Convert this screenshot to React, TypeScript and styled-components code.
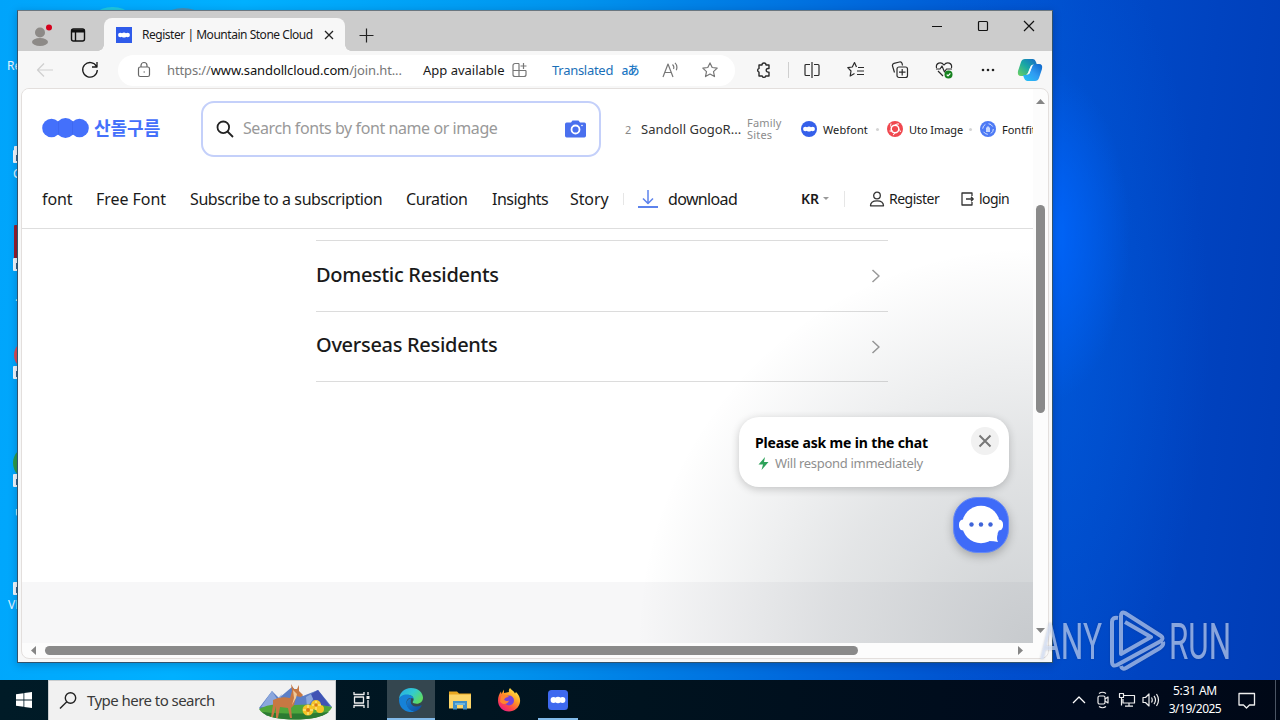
import type { ReactNode } from 'react';
import styled, { createGlobalStyle } from 'styled-components';

const GlobalStyle = createGlobalStyle`
  * { box-sizing: border-box; }
  body {
    margin: 0;
    overflow: hidden;
    font-family: 'Noto Sans', 'Open Sans', 'Noto Sans CJK KR', sans-serif;
  }
  svg { display: block; flex: none; }
`;

const Desktop = styled.div`
  position: relative;
  display: flex;
  flex-direction: column;
  justify-content: flex-end;
  width: 1280px;
  height: 720px;
  overflow: hidden;
  background:
    radial-gradient(ellipse 90px 170px at 1040px 235px, #006cff 0%, rgba(0, 102, 255, 0.7) 30%, rgba(0, 90, 230, 0) 100%),
    radial-gradient(ellipse 170px 420px at 1040px 330px, rgba(0, 95, 225, 0.6), rgba(0, 90, 220, 0) 100%),
    linear-gradient(96deg, #00a4fb 0%, #00b0ff 18%, #0094ee 42%, #0068dc 64%, #004ccb 80%, #0043c0 90%, #003cb6 100%);
`;

const Shortcut = styled.div<{ $y: number; $x?: number; $w?: number; $h?: number; $color?: string; $round?: boolean }>`
  position: absolute;
  left: ${(p) => p.$x ?? 13}px;
  top: ${(p) => p.$y}px;
  width: ${(p) => p.$w ?? 12}px;
  height: ${(p) => p.$h ?? 13}px;
  background: ${(p) => p.$color ?? '#f4f9fd'};
  border-radius: ${(p) => (p.$round ? '50%' : '1px')};
`;

const ArrowMark = styled.div`
  width: 5px;
  height: 6px;
  margin: 5px 0 0 3px;
  border: 2px solid #35618b;
  border-right: 0;
  border-bottom: 0;
`;

const ShortcutLabel = styled.div<{ $y: number; $x: number }>`
  position: absolute;
  left: ${(p) => p.$x}px;
  top: ${(p) => p.$y}px;
  font-size: 12px;
  line-height: 16px;
  color: #e6f5ff;
`;

const Label = styled.span<{ $size: number; $w?: number; $color?: string; $weight?: number; $track?: number }>`
  flex: none;
  width: ${(p) => (p.$w ? `${p.$w}px` : 'auto')};
  font-size: ${(p) => p.$size}px;
  font-weight: ${(p) => p.$weight ?? 400};
  letter-spacing: ${(p) => p.$track ?? 0}px;
  color: ${(p) => p.$color ?? '#1a1a1a'};
  white-space: nowrap;
`;

/* browser window */
const BrowserWindow = styled.div`
  position: absolute;
  left: 17px;
  top: 10px;
  width: 1036px;
  height: 653px;
  display: flex;
  flex-direction: column;
  background: #f7f7f7;
  border: 1px solid #32536c;
  border-top-color: #6b7780;
  box-shadow: 0 2px 8px rgba(0, 20, 60, 0.25);
`;

const TitleBar = styled.div`
  display: flex;
  align-items: flex-end;
  height: 40px;
  flex: none;
  background: #cccccc;
`;

const TitleIcons = styled.div`
  display: flex;
  align-items: center;
  gap: 19px;
  width: 86px;
  height: 33px;
  padding-left: 12px;
`;

const Tab = styled.div`
  position: relative;
  display: flex;
  align-items: center;
  width: 241px;
  height: 33px;
  padding: 0 9px 0 12px;
  background: #f7f7f7;
  border-radius: 8px 8px 0 0;

  &::before,
  &::after {
    content: '';
    position: absolute;
    bottom: 0;
    left: -6px;
    width: 6px;
    height: 6px;
    background: radial-gradient(circle at 0 0, transparent 5.5px, #f7f7f7 6px);
  }
  &::after {
    left: auto;
    right: -6px;
    background: radial-gradient(circle at 100% 0, transparent 5.5px, #f7f7f7 6px);
  }
`;

const TabTitle = styled(Label)`
  margin: 0 8px 0 10px;
`;

const NewTab = styled.div`
  display: flex;
  align-items: center;
  height: 33px;
  padding-left: 13px;
`;

const WindowButtons = styled.div`
  display: flex;
  align-self: flex-start;
  align-items: center;
  height: 29px;
  margin-left: auto;
`;

const Slot = styled.div<{ $w?: number }>`
  display: flex;
  align-items: center;
  justify-content: center;
  flex: none;
  width: ${(p) => p.$w ?? 44}px;
`;

const Toolbar = styled.div`
  display: flex;
  align-items: center;
  height: 37px;
  flex: none;
  padding: 1px 0 0 5px;
`;

const AddressBar = styled.div`
  display: flex;
  align-items: center;
  width: 617px;
  height: 31px;
  margin: 0 4px 0 5px;
  padding-left: 18px;
  border-radius: 16px;
  background: #fff;

  b {
    font-weight: 400;
    color: #111;
  }
`;

const Cluster = styled.div<{ $gap: number; $before: number }>`
  display: flex;
  align-items: center;
  flex: none;
  gap: ${(p) => p.$gap}px;
  margin-left: ${(p) => p.$before}px;
`;

const Rule = styled.div<{ $h: number; $color?: string }>`
  flex: none;
  width: 1px;
  height: ${(p) => p.$h}px;
  background: ${(p) => p.$color ?? '#cfcfcf'};
`;

const Viewport = styled.div`
  display: grid;
  grid-template-columns: 1011px 15px;
  grid-template-rows: 554px 15px;
  width: 1028px;
  height: 571px;
  margin-left: 3px;
  border: 1px solid #e3dfdd;
  border-radius: 8px;
  overflow: hidden;
  background: #fcfcfc;
`;

const Page = styled.div`
  position: relative;
  display: flex;
  flex-direction: column;
  overflow: hidden;
  background: #fff;
`;

const VerticalBar = styled.div`
  display: flex;
  flex-direction: column;
  align-items: center;
  justify-content: space-between;
  padding: 8px 0;
`;

const HorizontalBar = styled.div`
  display: flex;
  align-items: center;
  justify-content: space-between;
  padding: 0 8px;
`;

const Thumb = styled.div<{ $w: number; $h: number }>`
  width: ${(p) => p.$w}px;
  height: ${(p) => p.$h}px;
  border-radius: 5px;
  background: #8a8a8a;
`;

const VerticalThumb = styled(Thumb)`
  margin-bottom: 114px;
`;

const HorizontalThumb = styled(Thumb)`
  margin-right: 152px;
`;

/* page content */
const TopRow = styled.div`
  display: flex;
  align-items: center;
  flex: none;
  height: 80px;
  padding-left: 20px;
`;

const Brand = styled.div`
  display: flex;
  align-items: center;
  flex: none;
  gap: 5px;
  width: 159px;
  margin-bottom: 3px;
`;

const BrandName = styled(Label)`
  font-family: 'Noto Sans CJK KR', sans-serif;
  line-height: 20px;
  padding-bottom: 1px;
`;

const SearchBox = styled.div`
  display: flex;
  align-items: center;
  flex: none;
  width: 400px;
  height: 56px;
  padding: 0 13px 0 13px;
  border: 2px solid #c4d0fa;
  border-radius: 13px;
`;

const Placeholder = styled(Label)`
  flex: 1;
  margin: 0 0 2px 9px;
`;

const FamilyLabel = styled.div`
  flex: none;
  width: 54px;
  font-size: 11px;
  line-height: 12px;
  letter-spacing: 0.2px;
  color: #8c8c8c;
`;

const Site = styled.div<{ $w: number }>`
  display: flex;
  align-items: center;
  flex: none;
  gap: 6px;
  width: ${(p) => p.$w}px;
`;

const Dot = styled.i`
  width: 3px;
  height: 3px;
  border-radius: 50%;
  background: #d4d4d4;
`;

const NavRow = styled.div`
  display: flex;
  align-items: center;
  flex: none;
  height: 60px;
  padding-left: 20px;
  border-bottom: 1px solid #dedede;
`;

const NavLinks = styled.nav`
  display: flex;
  gap: 24px;
`;

const Account = styled.div`
  display: flex;
  align-items: center;
  margin-left: 64px;
`;

const ChoiceList = styled.div`
  flex: none;
  width: 572px;
  margin: 11px 0 0 294px;
  border-top: 1px solid #dcdcdc;
`;

const Choice = styled.div<{ $h: number }>`
  display: flex;
  align-items: center;
  justify-content: space-between;
  height: ${(p) => p.$h}px;
  padding-right: 7px;
  border-bottom: 1px solid #dcdcdc;
`;

const ChoiceTitle = styled(Label)`
  margin-bottom: 4px;
`;

const Footer = styled.div`
  height: 61px;
  margin-top: auto;
  background: #f7f7f8;
`;

const Shade = styled.div`
  position: absolute;
  right: 0;
  bottom: 0;
  width: 400px;
  height: 400px;
  background: radial-gradient(ellipse at right bottom, rgba(29, 43, 54, 0.22) 0%, rgba(29, 43, 54, 0.12) 36%, rgba(29, 39, 46, 0) 70%);
`;

const ChatPopup = styled.div`
  position: absolute;
  left: 717px;
  top: 328px;
  display: flex;
  justify-content: space-between;
  width: 270px;
  height: 70px;
  padding: 10px;
  border-radius: 20px;
  background: #fff;
  box-shadow: 0 2px 8px rgba(0, 0, 0, 0.2);
`;

const ChatText = styled.div`
  display: flex;
  flex-direction: column;
  padding: 5px 0 0 6px;
  line-height: 21px;
`;

const ChatHint = styled.div`
  display: flex;
  align-items: center;
  gap: 5px;
  padding-left: 2px;
`;

const ChatClose = styled.div`
  display: flex;
  align-items: center;
  justify-content: center;
  width: 28px;
  height: 28px;
  border-radius: 50%;
  background: #f1f1f1;
`;

const ChatButton = styled.div`
  position: absolute;
  left: 931px;
  top: 408px;
  width: 56px;
  height: 56px;
  border-radius: 24px;
  background: #3f6bf8;
  border: 1px solid #668af6;
  box-shadow: 0 3px 10px rgba(0, 0, 0, 0.25);
`;

/* taskbar */
const Taskbar = styled.div`
  display: flex;
  height: 40px;
  background: linear-gradient(90deg, #001b27, #00131f 50%, #000a1c 85%, #000817);
`;

const TaskSearch = styled.div`
  display: flex;
  align-items: center;
  width: 288px;
  padding: 0 2px 0 10px;
  border: 1px solid #c9cdcf;
  border-bottom: 0;
  background: #f1f1f1;
`;

const TaskText = styled(Label)`
  flex: 1;
  margin: 0 0 1px 10px;
`;

const TaskItem = styled.div<{ $active?: boolean; $line?: number }>`
  position: relative;
  display: flex;
  align-items: center;
  justify-content: center;
  width: 48px;
  margin-right: 1px;
  background: ${(p) => (p.$active ? '#34464f' : 'transparent')};

  &::after {
    content: '';
    position: absolute;
    bottom: 0;
    width: ${(p) => p.$line ?? 0}px;
    height: 2px;
    background: #82bbea;
  }
`;

const Tray = styled.div`
  display: flex;
  align-items: center;
  margin-left: auto;
`;

const Clock = styled.div`
  display: flex;
  flex-direction: column;
  align-items: center;
  width: 64px;
  line-height: 18px;
`;

const ShowDesktop = styled.div`
  width: 5px;
  height: 40px;
  margin-left: 8px;
  border-left: 1px solid #4b5564;
`;

const Watermark = styled.svg`
  position: absolute;
  left: 1036px;
  top: 606px;
  overflow: visible;
  filter: drop-shadow(0 0 1px rgba(20, 30, 60, 0.35));
`;

const Line = (props: { w?: number; h?: number; stroke?: string; sw?: number; children: ReactNode }) => {
  const { w = 18, h = 18, stroke = '#2b2b2b', sw = 1.2, children } = props;
  return (
    <svg width={w} height={h} viewBox={`0 0 ${w} ${h}`} fill='none' stroke={stroke} strokeWidth={sw} strokeLinejoin='round'>
      {children}
    </svg>
  );
};

const Triangle = ({ d }: { d: string }) => (
  <svg width='9' height='9' viewBox='0 0 9 9' fill='#858585'>
    <path d={d} />
  </svg>
);

const CloudTile = ({ size, radius, fill }: { size: number; radius: number; fill: string }) => (
  <svg width={size} height={size} viewBox='0 0 20 20'>
    <rect width='20' height='20' rx={radius} fill={fill} />
    <g fill='#fff'>
      <circle cx='5.500' cy='10' r='2.900' />
      <circle cx='10' cy='10' r='3.200' />
      <circle cx='14.500' cy='10' r='2.900' />
    </g>
  </svg>
);

const ProfileIcon = () => (
  <svg width='20' height='24' viewBox='0 0 20 24' overflow='visible'>
    <g fill='#8d8a87'>
      <circle cx='10' cy='9.500' r='5' />
      <ellipse cx='10' cy='19' rx='8' ry='4' />
    </g>
    <circle cx='19' cy='4.500' r='3' fill='#d5001c' />
  </svg>
);

const CopilotIcon = () => (
  <svg width='26' height='24' viewBox='0 0 26 24'>
    <defs>
      <linearGradient id='cpA' x1='0' y1='1' x2='1' y2='0'>
        <stop offset='0' stopColor='#6fd35f' />
        <stop offset='.5' stopColor='#19a8a4' />
        <stop offset='1' stopColor='#1667c9' />
      </linearGradient>
      <linearGradient id='cpB' x1='1' y1='0' x2='0' y2='1'>
        <stop offset='0' stopColor='#0c64c8' />
        <stop offset='.5' stopColor='#2f9cf2' />
        <stop offset='1' stopColor='#27c5f5' />
      </linearGradient>
    </defs>
    <path d='M8 1h8q2 0 3 3l1 3h-3q-3 0-4 3l-2 6q-1 2-4 2H4q-4 0-3-5L4 4Q5 1 8 1z' fill='url(#cpA)' />
    <path d='M18 23h-8q-2 0-3-3l-1-3h3q3 0 4-3l2-5q1-3 4-3h3q4 0 3 5l-3 9q-1 3-4 3z' fill='url(#cpB)' />
    <path d='M14 7.500l3-1.500q-2 1-3 5l-1.500 4.500-3.500 1.500q2-1 3-5z' fill='#f5fbff' />
  </svg>
);

const EdgeIcon = () => (
  <svg width='24' height='24' viewBox='0 0 24 24'>
    <defs>
      <linearGradient id='edgeTop' x1='0' y1='0' x2='1' y2='.6'>
        <stop offset='0' stopColor='#26a9e8' />
        <stop offset='.55' stopColor='#32cbd0' />
        <stop offset='1' stopColor='#5edb62' />
      </linearGradient>
      <linearGradient id='edgeLow' x1='0' y1='0' x2='1' y2='1'>
        <stop offset='0' stopColor='#1a80d2' />
        <stop offset='1' stopColor='#0c4a9c' />
      </linearGradient>
    </defs>
    <path d='M0 12C0 5 5 0 12 0c7.500 0 12 5 12 9.800 0 3.700-3 6-6.200 6-2.300 0-4.200-.8-4.200-1.700 0-.6 1-1 1-2.700C14.600 8.500 12 7 9 7 4 7 0 9 0 12z' fill='url(#edgeTop)' />
    <path d='M0 12c0-3.500 4-5.500 8-5.500 3.800 0 6.500 2.200 6.600 4.500C13 9 7.500 9.500 7.500 14.500c0 4.500 4.500 8.500 8.500 9C8 26 0 20.500 0 12z' fill='#1682d8' />
    <path d='M12.500 10c-3 .5-5 2.500-5 5.500 0 5 5 8 8.500 8 3-1 5.500-3.500 6.500-5.500.3-.8-.2-1-.8-.6-4 2.300-10 1-10-4 0-1.300.3-2.500.8-3.400z' fill='url(#edgeLow)' />
  </svg>
);

const FolderIcon = () => (
  <svg width='22' height='20' viewBox='0 0 22 20'>
    <path d='M0 1.500h8l2 2h12V18H0z' fill='#e9a820' />
    <path d='M0 4.500h22V18.500H0z' fill='#fcd568' />
    <path d='M4 11h14v8.500h-4V15H8v4.500H4z' fill='#3f91c9' />
    <path d='M6 13h10v2H6z' fill='#6db6dd' />
  </svg>
);

const FirefoxIcon = () => (
  <svg width='24' height='24' viewBox='0 0 24 24'>
    <defs>
      <linearGradient id='fox' x1='.85' y1='.05' x2='.2' y2='1'>
        <stop offset='0' stopColor='#fff04a' />
        <stop offset='.4' stopColor='#ff9a24' />
        <stop offset='.7' stopColor='#ff4a44' />
        <stop offset='1' stopColor='#e8198b' />
      </linearGradient>
    </defs>
    <path d='M13 0c1 2 4 3 5 5.500l1-1.500c3 3 4.500 6 4 10-.7 5.500-5.500 9.500-11 9.500C6 23.500 1 19 1 12.500 1 9 2 6 4 3.500l.5 2.500 2.500-4.500V5l5-1c-.5-1.500 0-3 1-4z' fill='url(#fox)' />
    <circle cx='12' cy='12.500' r='5' fill='#7543dc' />
    <path d='M4 8c3-1.500 6-1 8 1-3 0-4 1-5 2.500 1 1.500 3 2 5 1-1 4-6 5-9 1z' fill='#ff852e' />
  </svg>
);

const MeadowArt = () => (
  <svg width='75' height='38' viewBox='0 0 75 38'>
    <path d='M1 26L14 9l7 7 13-11 11 9 15-6 14 17-10 9H9z' fill='#5c7fc6' />
    <path d='M3 25L14 9l5 8 5-5-5 14zM48 15l12-7 6 12-10-4-7 9z' fill='#8ba7dd' />
    <path d='M53 12l7-4 12 16H58z' fill='#4053b4' />
    <path d='M1 27c12-6 22-5 35-4 15-1 27-1 38 2-3 8-16 12.500-37 12.500C17 37.500 5 34 1 27z' fill='#4fa63b' />
    <path d='M4 30c18 2 48 2 67 0-6 5-18 7.500-34 7.500S9 35 4 30z' fill='#2c7b32' />
    <path d='M15 18q7-4 17-2l2-7-1-7 3 5h3l2-4v6l4 4-2 2-5-1-2 9-3 3 1 10h-2l-2-10-8-1-2 11h-2V24l-3 11h-2l2-12z' fill='#c77843' />
    <path d='M35 8l1 8-2 7 4-7 1-4z' fill='#f0c89a' />
    <g fill='#f6c426'>
      <circle cx='50' cy='28' r='5.500' />
      <circle cx='58' cy='23' r='5' />
      <circle cx='62' cy='27' r='4' />
    </g>
    <g fill='none' stroke='#fff1a0'>
      <path d='M50 23v10M45 28h10M58 19v9M54 23h9' />
    </g>
    <g fill='#d97a12'>
      <circle cx='50' cy='28' r='2' />
      <circle cx='58' cy='23' r='1.800' />
    </g>
  </svg>
);

const navItems = [
  { text: 'font', w: 30, track: -0.1 },
  { text: 'Free Font', w: 70, track: -0.05 },
  { text: 'Subscribe to a subscription', w: 192, track: -0.4 },
  { text: 'Curation', w: 62, track: -0.4 },
  { text: 'Insights', w: 54, track: -0.5 },
  { text: 'Story', w: 39, track: -0.1 },
];

const choices = [
  { text: 'Domestic Residents', h: 71 },
  { text: 'Overseas Residents', h: 70 },
];

const App = () => {
  return (
    <>
      <GlobalStyle />
      <Desktop>
        <Shortcut $x={98} $y={7} $w={29} $h={12} $color='#1fc9df' $round />
        <Shortcut $x={168} $y={8} $w={30} $h={12} $color='#4a8fb3' $round />
        <ShortcutLabel $x={7} $y={58}>Re</ShortcutLabel>
        <Shortcut $x={14} $y={146} $h={8} />
        <Shortcut $y={150}><ArrowMark /></Shortcut>
        <ShortcutLabel $x={13} $y={166}>C</ShortcutLabel>
        <Shortcut $x={14} $y={225} $h={38} $color='#981e2c' />
        <Shortcut $y={258}><ArrowMark /></Shortcut>
        <ShortcutLabel $x={15} $y={289}>.</ShortcutLabel>
        <Shortcut $x={14} $y={340} $w={30} $h={30} $color='#dc4a52' $round />
        <Shortcut $y={366}><ArrowMark /></Shortcut>
        <Shortcut $y={446} $w={34} $h={34} $color='#2d9c48' $round />
        <Shortcut $y={474}><ArrowMark /></Shortcut>
        <ShortcutLabel $x={15} $y={504}>u</ShortcutLabel>
        <Shortcut $y={582}><ArrowMark /></Shortcut>
        <ShortcutLabel $x={8} $y={597}>VL</ShortcutLabel>

        <BrowserWindow>
          <TitleBar>
            <TitleIcons>
              <ProfileIcon />
              <Line stroke='#111' sw={1.400}>
                <rect x='2.500' y='3' width='13' height='12' rx='2' />
                <path d='M2.500 5h13' strokeWidth='3' />
                <path d='M6.500 5v10' />
              </Line>
            </TitleIcons>
            <Tab>
              <CloudTile size={16} radius={0} fill='#2f5bea' />
              <TabTitle $size={12} $w={171} $track={-0.47}>Register | Mountain Stone Cloud</TabTitle>
              <Line w={16} h={16} stroke='#222' sw={1.300}><path d='M4 4l8 8M12 4l-8 8' /></Line>
            </Tab>
            <NewTab>
              <Line w={16} h={16} stroke='#222'><path d='M8.500 1.500v14M1.500 8.500h14' /></Line>
            </NewTab>
            <WindowButtons>
              <Slot $w={46}><Line w={12} h={12} stroke='#111' sw={1}><path d='M1 6.500h10' /></Line></Slot>
              <Slot $w={46}><Line w={12} h={12} stroke='#111'><rect x='1.500' y='1.500' width='9' height='9' rx='1' /></Line></Slot>
              <Slot $w={46}><Line w={12} h={12} stroke='#111'><path d='M1 1l10 10M11 1L1 11' /></Line></Slot>
            </WindowButtons>
          </TitleBar>

          <Toolbar>
            <Slot><Line stroke='#cfcfcf'><path d='M17 9H1.500M8 2.500L1.500 9 8 15.500' /></Line></Slot>
            <Slot $w={46}>
              <Line stroke='#1b1b1b' sw={1.300}><path d='M15.500 5.500A7.300 7.300 0 1 0 16.300 9M16 1v5h-5' /></Line>
            </Slot>
            <AddressBar>
              <Line w={16} stroke='#666'>
                <rect x='2.500' y='6' width='11' height='9.500' rx='1.800' />
                <path d='M5 6V4.500a3 3 0 0 1 6 0V6M7.500 11h1.500' />
              </Line>
              <Cluster $gap={0} $before={15}>
                <Label $size={13} $w={235} $color='#767676' $track={-0.13}>
                  https://<b>www.sandollcloud.com</b>/join.ht...
                </Label>
              </Cluster>
              <Cluster $gap={8} $before={21}>
                <Label $size={13} $w={81}>App available</Label>
                <Line w={16} h={16} stroke='#777'>
                  <path d='M7 1.500H3a2 2 0 0 0-2 2v9a2 2 0 0 0 2 2h9a2 2 0 0 0 2-2V8.500M7 1.500v13M1 8.500h13M11.500 1v6M8.500 4h6' />
                </Line>
              </Cluster>
              <Cluster $gap={8} $before={24}>
                <Label $size={13} $w={62} $color='#1a6fb8' $track={-0.28}>Translated</Label>
                <Slot $w={16}><Label $size={12} $color='#1a76c4' $weight={500} $track={-1}>aあ</Label></Slot>
              </Cluster>
              <Cluster $gap={24} $before={24}>
                <Line w={16} h={16} stroke='#777'>
                  <path d='M1 15L6 2l5 13M2.700 10.500h6.600M10.500 2.500q2 2 1 4.500M13 .8q3 3 1.300 7.400' />
                </Line>
                <Line w={16} h={16} stroke='#777'>
                  <path d='M8 .9l2.200 4.600 5 .6-3.700 3.500 1 5L8 12.100l-4.500 2.500 1-5L.8 6.100l5-.6z' />
                </Line>
              </Cluster>
            </AddressBar>
            <Slot $w={48}>
              <Line sw={1.400}>
                <path d='M5 4h3a2 2 0 0 1 4 0h3v3.500h-1a1.800 1.800 0 0 0 0 3.600h1V15h-3.300a1.800 1.800 0 0 1-3.500 0H5v-3.800a2 2 0 0 1 0-3.800z' />
              </Line>
            </Slot>
            <Slot $w={3}><Rule $h={16} /></Slot>
            <Slot>
              <Line>
                <path d='M7 3.500H3a1 1 0 0 0-1 1v9a1 1 0 0 0 1 1h4M11 3.500h4a1 1 0 0 1 1 1v9a1 1 0 0 1-1 1h-4M9 1v16' />
              </Line>
            </Slot>
            <Slot>
              <Line>
                <path d='M9.500 6L7.500 1.500 5.300 6l-4.500.7L4 10l-.8 5L7.500 12.500M11 6.500h6M10 10h7M10 13.500h7' />
              </Line>
            </Slot>
            <Slot>
              <Line>
                <path d='M3.500 11.500L1.500 5q-.4-2 1.500-2.600L8.500 1q2-.4 2.600 1.500l.4 2' />
                <rect x='6' y='6' width='10.500' height='10.500' rx='2' />
                <path d='M11.200 8v6.500M8 11.200h6.500' />
              </Line>
            </Slot>
            <Slot>
              <Line>
                <path d='M1.500 7C.5 2 6 0 9 4c3-4 8.500-2 7.500 3M3 10l5 5M1 8h4l2-3 2.500 6L11.500 8H17' />
                <circle cx='13.500' cy='13.500' r='4' fill='#16821f' stroke='none' />
                <path d='M11.700 13.600l1.300 1.200 2.400-2.500' stroke='#fff' />
              </Line>
            </Slot>
            <Slot>
              <svg width='16' height='4' fill='#222'>
                <circle cx='3' cy='2' r='1.300' />
                <circle cx='8' cy='2' r='1.300' />
                <circle cx='13' cy='2' r='1.300' />
              </svg>
            </Slot>
            <Slot $w={40}><CopilotIcon /></Slot>
          </Toolbar>

          <Viewport>
            <Page>
              <TopRow>
                <Brand>
                  <svg width='47' height='20' viewBox='0 0 47 20' fill='#4470fb'>
                    <circle cx='9.500' cy='10' r='9.300' />
                    <circle cx='23.500' cy='10' r='9.900' />
                    <circle cx='37.500' cy='10' r='9.300' />
                    <path d='M16.500 3v14M30.500 3v14' stroke='#3a62e8' strokeWidth='1' opacity='.5' />
                  </svg>
                  <BrandName $size={18} $weight={700} $color='#4470fb'>산돌구름</BrandName>
                </Brand>
                <SearchBox>
                  <Line stroke='#222' sw={1.800}><circle cx='7.300' cy='7.300' r='5.800' /><path d='M11.500 11.500L17 17' /></Line>
                  <Placeholder $size={16} $color='#999' $track={-0.42}>Search fonts by font name or image</Placeholder>
                  <svg width='21' height='18' viewBox='0 0 21 18'>
                    <path d='M2 2.500h4L7.500 .5h6L15 2.500h4a1.800 1.800 0 0 1 2 1.800v11.400a1.800 1.800 0 0 1-2 1.800H2a1.800 1.800 0 0 1-2-1.800V4.300A1.800 1.800 0 0 1 2 2.500z' fill='#4a70ee' />
                    <circle cx='10.500' cy='9.500' r='4' fill='none' stroke='#fff' strokeWidth='1.800' />
                    <circle cx='17' cy='5.500' r='.8' fill='#fff' />
                  </svg>
                </SearchBox>
                <Cluster $gap={9} $before={24}>
                  <Label $size={11} $w={7} $color='#888'>2</Label>
                  <Label $size={13} $w={106} $color='#333'>Sandoll GogoR...</Label>
                </Cluster>
                <FamilyLabel>Family Sites</FamilyLabel>
                <Site $w={86}>
                  <CloudTile size={16} radius={10} fill='#3560ea' />
                  <Label $size={11} $w={47} $track={0.1}>Webfont</Label>
                  <Dot />
                </Site>
                <Site $w={93}>
                  <svg width='16' height='16' viewBox='0 0 16 16'>
                    <circle cx='8' cy='8' r='8' fill='#f0484f' />
                    <circle cx='8' cy='8' r='3.800' fill='none' stroke='#fff' strokeWidth='1.500' />
                    <path d='M4 2.500q-1 2 .5 4M12 3q-2-.5-4 1M13.500 11q-.5-2-2-3M6 14q2-1 2-2.500M2.500 10q1.500.500 3-.500' stroke='#fff' fill='none' />
                  </svg>
                  <Label $size={11} $w={54} $track={-0.05}>Uto Image</Label>
                  <Dot />
                </Site>
                <Site $w={60}>
                  <svg width='16' height='16' viewBox='0 0 16 16'>
                    <circle cx='8' cy='8' r='8' fill='#4d7af5' />
                    <circle cx='8' cy='8' r='5.300' fill='none' stroke='#d5e1ff' strokeDasharray='5 3.300' />
                    <path d='M6 11V7l2-2 2 2v4z' fill='#c8d8ff' />
                  </svg>
                  <Label $size={11}>Fontfit</Label>
                </Site>
              </TopRow>

              <NavRow>
                <NavLinks>
                  {navItems.map((item) => (
                    <Label key={item.text} $size={16} $w={item.w} $track={item.track}>{item.text}</Label>
                  ))}
                </NavLinks>
                <Cluster $gap={14} $before={14}>
                  <Rule $h={12} $color='#e6e6e6' />
                  <Line w={20} h={20} stroke='#5d83ec' sw={1.500}>
                    <path d='M10 1v13M5 9.500l5 5 5-5' />
                    <path d='M0 18h20' strokeWidth='2' />
                  </Line>
                </Cluster>
                <Cluster $gap={0} $before={10}>
                  <Label $size={16} $w={69} $track={-0.65}>download</Label>
                </Cluster>
                <Account>
                  <Label $size={14} $w={22} $weight={600}>KR</Label>
                  <svg width='6' height='4'><path d='M0 0h6L3 3z' fill='#999' /></svg>
                  <Cluster $gap={24} $before={15}>
                    <Rule $h={16} $color='#e6e6e6' />
                    <Cluster $gap={4} $before={0}>
                      <Line w={16} h={16} stroke='#333' sw={1.300}>
                        <circle cx='8' cy='4.500' r='3.300' />
                        <path d='M1.500 14.800q0-5 6.500-5t6.500 5z' />
                      </Line>
                      <Label $size={14} $w={52} $track={-0.5}>Register</Label>
                    </Cluster>
                  </Cluster>
                  <Cluster $gap={3} $before={19}>
                    <Line w={16} h={16} stroke='#333' sw={1.300}>
                      <path d='M12 5V2H2v12h10v-3M6 8h7M11 5.800L13.200 8 11 10.200' />
                    </Line>
                    <Label $size={14} $w={30} $track={-0.6}>login</Label>
                  </Cluster>
                </Account>
              </NavRow>

              <ChoiceList>
                {choices.map((choice) => (
                  <Choice key={choice.text} $h={choice.h}>
                    <ChoiceTitle $size={20} $weight={500} $track={-0.3}>{choice.text}</ChoiceTitle>
                    <Line w={10} h={14} stroke='#999' sw={1.500}><path d='M1.500 1l6.500 6-6.500 6' /></Line>
                  </Choice>
                ))}
              </ChoiceList>
              <Footer />
              <Shade />
              <ChatPopup>
                <ChatText>
                  <Label $size={14} $weight={700} $color='#000' $track={-0.16}>Please ask me in the chat</Label>
                  <ChatHint>
                    <svg width='13' height='13' viewBox='0 0 13 13'><path d='M8 0L1.500 7.500H6L4.500 13 11.500 5H7z' fill='#2ea25a' /></svg>
                    <Label $size={13} $color='#8f8f8f' $track={-0.3}>Will respond immediately</Label>
                  </ChatHint>
                </ChatText>
                <ChatClose>
                  <Line w={14} h={14} stroke='#777' sw={2}><path d='M1.500 1.500l11 11M12.500 1.500l-11 11' /></Line>
                </ChatClose>
              </ChatPopup>
              <ChatButton>
                <svg width='54' height='54' viewBox='0 0 54 54'>
                  <circle cx='27' cy='26.500' r='18.800' fill='#fff' />
                  <rect x='5' y='21.500' width='44' height='11' rx='4.500' fill='#fff' />
                  <path d='M35 43q5 0 9 1-2-3 0-9z' fill='#fff' />
                  <g fill='#3f64d8'>
                    <circle cx='17.500' cy='26.500' r='2.200' />
                    <circle cx='27' cy='26.500' r='2.200' />
                    <circle cx='36.500' cy='26.500' r='2.200' />
                  </g>
                </svg>
              </ChatButton>
            </Page>
            <VerticalBar>
              <Triangle d='M4.500 2L9 7H0z' />
              <VerticalThumb $w={9} $h={208} />
              <Triangle d='M4.500 7L9 2H0z' />
            </VerticalBar>
            <HorizontalBar>
              <Triangle d='M1 4.500L6 0v9z' />
              <HorizontalThumb $w={813} $h={9} />
              <Triangle d='M7 4.500L2 0v9z' />
            </HorizontalBar>
          </Viewport>
        </BrowserWindow>

        <Watermark width='200' height='70' viewBox='0 0 200 70'>
          <g fill='#dce8ff' fillOpacity='.62' fontFamily='Roboto, sans-serif' fontSize='50'>
            <text x='4' y='53' textLength='62' lengthAdjust='spacingAndGlyphs'>ANY</text>
            <text x='133' y='53' textLength='62' lengthAdjust='spacingAndGlyphs'>RUN</text>
          </g>
          <g fill='none' stroke='#dce8ff' strokeOpacity='.6' strokeWidth='4' strokeLinejoin='round'>
            <path d='M82 12q-6-1-6 4v40q0 5 5 3l44-24q3-3 0-5L89 7q-4-2-4 3v38l30-17-26-15' />
            <path d='M85 60q1 4 5 2l34-20q4-3 3-6' />
          </g>
        </Watermark>

        <Taskbar>
          <Slot $w={48}>
            <svg width='16' height='16' viewBox='0 0 16 16' fill='#fff'>
              <path d='M0 2.200L7.500 1.200V7.600H0zM8.300 1.100L16 0v7.600H8.300zM0 8.400h7.500v6.400L0 13.800zM8.300 8.400H16V16l-7.700-1.100z' />
            </svg>
          </Slot>
          <TaskSearch>
            <Line stroke='#222' sw={1.400}><circle cx='11.500' cy='6' r='5.200' /><path d='M7.800 9.800L1 16.500' /></Line>
            <TaskText $size={15} $color='#3a3a3a' $track={-0.55}>Type here to search</TaskText>
            <MeadowArt />
          </TaskSearch>
          <Slot $w={51}>
            <Line stroke='#eee' sw={1.300}>
              <path d='M1 1v2.500h10V1M1 17v-2.500h10V17M1.500 6h9v6h-9zM15 1v3M15 9v8' />
              <path d='M13.500 6.500h3' strokeWidth='3' />
            </Line>
          </Slot>
          <TaskItem $active $line={48}><EdgeIcon /></TaskItem>
          <TaskItem><FolderIcon /></TaskItem>
          <TaskItem><FirefoxIcon /></TaskItem>
          <TaskItem $line={40}><CloudTile size={20} radius={3.500} fill='#3e69ef' /></TaskItem>
          <Tray>
            <Slot $w={24}><Line w={14} h={8} stroke='#fff' sw={1.300}><path d='M1 7l6-6 6 6' /></Line></Slot>
            <Slot $w={24}>
              <Line w={14} stroke='#eee'>
                <rect x='2' y='5' width='7' height='8' rx='1.500' />
                <path d='M9 8l3-2v6l-3-2M3 2.500q3.500-2.500 7 0M3 15.500q3.500 2.500 7 0' />
              </Line>
            </Slot>
            <Slot $w={24}>
              <Line stroke='#eee'>
                <path d='M6 4.500h10.500v7.500H5V8M11 12v3M7 15.200h8M1.500 2.500h4v4h-4zM3.500 6.500v8' />
              </Line>
            </Slot>
            <Slot $w={24}>
              <Line stroke='#eee'>
                <path d='M1 6.500h2.500L7 3v12l-3.500-3.500H1zM9.500 6.500q1.500 2.500 0 5M12 4.800q3 4.200 0 8.400M14.500 3q4 6 0 12' />
              </Line>
            </Slot>
            <Clock>
              <Label $size={12} $color='#fff' $track={-0.2}>5:31 AM</Label>
              <Label $size={12} $color='#fff' $track={-0.5}>3/19/2025</Label>
            </Clock>
            <Slot $w={40}>
              <Line w={18} h={17} stroke='#eee' sw={1.300}><path d='M1 1.500h15.500v11.500h-5l-3 3-3-3H1z' /></Line>
            </Slot>
            <ShowDesktop />
          </Tray>
        </Taskbar>
      </Desktop>
    </>
  );
};

export default App;
